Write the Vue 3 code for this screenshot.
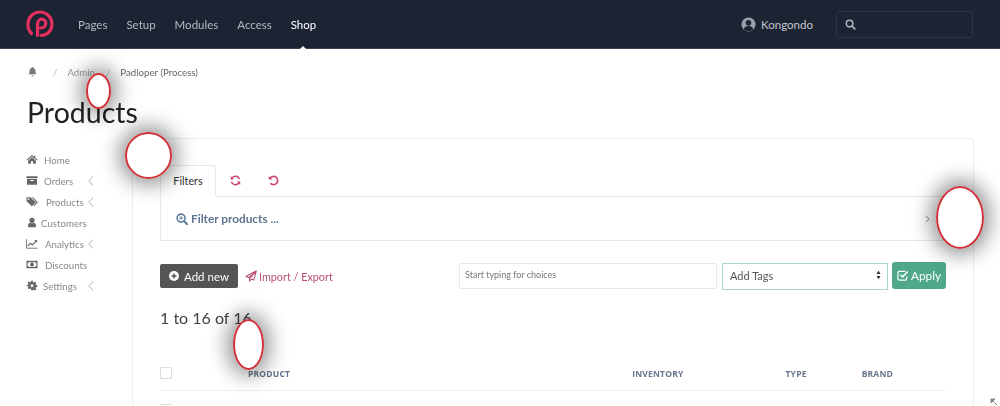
<script setup>
const navItems = ['Pages', 'Setup', 'Modules', 'Access', 'Shop']
const sideItems = [
  { label: 'Home', icon: 'home', gap: 6, arrow: false },
  { label: 'Orders', icon: 'archive', gap: 6, arrow: true },
  { label: 'Products', icon: 'tags', gap: 8, arrow: true },
  { label: 'Customers', icon: 'user', gap: 3, arrow: false },
  { label: 'Analytics', icon: 'chart', gap: 7, arrow: true },
  { label: 'Discounts', icon: 'money', gap: 7, arrow: false },
  { label: 'Settings', icon: 'cog', gap: 5, arrow: true },
]
const columns = [
  { label: 'PRODUCT', cls: 'col-product' },
  { label: 'INVENTORY', cls: 'col-inventory' },
  { label: 'TYPE', cls: 'col-type' },
  { label: 'BRAND', cls: 'col-brand' },
]
</script>

<template>
  <div class="page">
    <div class="content">
      <header class="topbar">
        <svg class="logo" viewBox="0 0 28 28" width="28" height="28">
          <path d="M5.500 23.500C3 21 1.900 18 1.900 14.500 1.900 7.600 7.400 2 14 2S26 7.600 26 14c0 6.600-4.500 11-11 11.500" fill="none" stroke="#e2305f" stroke-width="3.200" stroke-linecap="round"/>
          <path d="M11.500 25.500V14.500c0-3 1.800-5.300 4.300-5.300 2.400 0 4 1.800 4 4.200 0 2.800-2.200 4.600-5.300 4.600" fill="none" stroke="#e2305f" stroke-width="3.200" stroke-linecap="round"/>
        </svg>
        <nav class="nav">
          <a v-for="item in navItems" :key="item" class="nav-link" :class="{ active: item === 'Shop' }">{{ item }}</a>
        </nav>
        <div class="user">
          <svg viewBox="0 0 16 16" width="15" height="15">
            <circle cx="8" cy="8" r="7.500" fill="#9aa0ac"/>
            <circle cx="8" cy="6.200" r="3" fill="#1c2333"/>
            <path d="M2.800 13c.8-2.400 2.800-3.400 5.200-3.400s4.400 1 5.200 3.400A7 7 0 0 1 8 15a7 7 0 0 1-5.200-2z" fill="#1c2333"/>
          </svg>
          <span>Kongondo</span>
        </div>
        <div class="search">
          <svg viewBox="0 0 12 12" width="11" height="11">
            <circle cx="5" cy="5" r="3.600" fill="none" stroke="#aab0ba" stroke-width="1.700"/>
            <path d="M7.700 7.700l3 3" stroke="#aab0ba" stroke-width="2" stroke-linecap="round"/>
          </svg>
        </div>
      </header>

      <div class="crumbs">
        <svg class="bell" viewBox="0 0 10 11" width="9" height="10">
          <path d="M5 0a1 1 0 0 1 1 1c1.700.4 2.300 1.800 2.300 3.300 0 2 .5 2.800 1.200 3.700H.5c.7-.9 1.200-1.700 1.200-3.700C1.700 2.800 2.300 1.400 4 1a1 1 0 0 1 1-1zM3.800 9h2.400a1.200 1.200 0 0 1-2.400 0z" fill="#777"/>
        </svg>
        <span class="sep first">/</span>
        <span class="crumb-link">Admin</span>
        <span class="sep">/</span>
        <span class="crumb-current">Padloper (Process)</span>
      </div>

      <h1 class="title">Products</h1>

      <div class="body">
        <aside class="side">
          <div v-for="item in sideItems" :key="item.label" class="side-item">
            <svg class="side-icon" :class="'i-' + item.icon" viewBox="0 0 14 12" fill="#666">
              <path v-if="item.icon === 'home'" d="M7 .8l2.200 1.900V1.500h1.600v2.600L13.500 6.400l-.7.800L7 2.400 1.200 7.200l-.7-.8zM7 3.500l4.500 3.700V11H8.300V8H5.700v3H2.500V7.200z"/>
              <path v-else-if="item.icon === 'archive'" d="M.5 1h13v2.500H.5zM1.200 4.200h11.600V11H1.200zM5 5.500v1h4v-1z" fill-rule="evenodd"/>
              <path v-else-if="item.icon === 'tags'" d="M.5 1h4.800l6 6-4.500 4.500-6.300-6zM2.800 2.300a1 1 0 1 0 .01 0zM6.800 1h1.400l5.500 6-4.200 4.500-.8-.8L12 7z" fill-rule="evenodd"/>
              <path v-else-if="item.icon === 'user'" d="M7 .5a3 3 0 0 1 3 3 3 3 0 0 1-6 0 3 3 0 0 1 3-3zM2.500 11.500V9c0-1.800 1.200-2.800 2.500-2.800.6.500 1.200.7 2 .7s1.400-.2 2-.7c1.300 0 2.500 1 2.500 2.800v2.500z"/>
              <template v-else-if="item.icon === 'chart'">
                <path d="M.5 1v10.500h13" fill="none" stroke="#666" stroke-width="1"/>
                <path d="M2 9l3-3.200 2.400 1.800L12 3" fill="none" stroke="#666" stroke-width="1.400"/>
                <path d="M10 2h3v3z"/>
              </template>
              <template v-else-if="item.icon === 'money'">
                <path d="M.5 1.500h13v9H.5zM1.800 3v6h10.400V3z" fill-rule="evenodd"/>
                <ellipse cx="7" cy="6" rx="2.200" ry="2.600"/>
                <path d="M1.800 3h2L1.800 5zM12.200 3h-2l2 2zM1.800 9h2l-2-2zM12.200 9h-2l2-2z"/>
              </template>
              <path v-else d="M6 .5h2l.3 1.600 1 .4 1.400-.9 1.400 1.400-.9 1.400.4 1 1.600.3v2l-1.600.3-.4 1 .9 1.400-1.400 1.400-1.400-.9-1 .4L8 11.500H6l-.3-1.600-1-.4-1.400.9-1.400-1.400.9-1.400-.4-1L.8 7.300v-2l1.600-.3.4-1-.9-1.400 1.400-1.400 1.400.9 1-.4zM7 4.500a1.700 1.700 0 1 0 .01 0z" fill-rule="evenodd"/>
            </svg>
            <span class="side-label" :style="{ marginLeft: item.gap + 'px' }">{{ item.label }}</span>
            <svg v-if="item.arrow" class="side-arrow" viewBox="0 0 6 10" width="6" height="10">
              <path d="M5 .5L1 5l4 4.500" fill="none" stroke="#c4c4c4" stroke-width="1.100"/>
            </svg>
          </div>
        </aside>

        <main class="card">
          <div class="tabs">
            <div class="tab">Filters</div>
            <svg class="tab-icon" viewBox="0 0 12 12" width="11" height="11">
              <path d="M10.500 4.300A4.700 4.700 0 0 0 2.300 3.400M1.500 7.700a4.700 4.700 0 0 0 8.200.9" fill="none" stroke="#c9476f" stroke-width="1.800"/>
              <path d="M.8 1.200v3.600h3.600zM11.200 10.800V7.200H7.600z" fill="#c9476f"/>
            </svg>
            <svg class="tab-icon second" viewBox="0 0 12 12" width="11" height="11">
              <path d="M2.400 3.400A4.500 4.500 0 1 1 2.600 9" fill="none" stroke="#c9476f" stroke-width="1.800"/>
              <path d="M.8 1v4h4z" fill="#c9476f"/>
            </svg>
          </div>
          <div class="filter-panel">
            <svg viewBox="0 0 13 13" width="12" height="12">
              <circle cx="5.500" cy="5.500" r="4.300" fill="none" stroke="#5b7a9c" stroke-width="1.700"/>
              <path d="M8.800 8.800l3.300 3.300" stroke="#5b7a9c" stroke-width="2.200" stroke-linecap="round"/>
              <path d="M3.500 5.500h4M5.500 3.500v4" stroke="#5b7a9c" stroke-width="1.100"/>
            </svg>
            <span class="filter-text">Filter products ...</span>
            <svg class="filter-arrow" viewBox="0 0 6 10" width="5" height="8">
              <path d="M1 1l4 4-4 4" fill="none" stroke="#aaa" stroke-width="1.400"/>
            </svg>
          </div>

          <div class="actions">
            <button class="btn-add">
              <svg viewBox="0 0 12 12" width="10" height="10">
                <circle cx="6" cy="6" r="6" fill="#fff"/>
                <path d="M6 3v6M3 6h6" stroke="#555" stroke-width="1.800"/>
              </svg>
              <span>Add new</span>
            </button>
            <a class="import">
              <svg viewBox="0 0 13 13" width="12" height="12">
                <path d="M12.300.8L1 7l2.800 1.300L11 2.500 5 9v3l2-2.200 2.600 1.200z" fill="none" stroke="#b8506f" stroke-width="1.100" stroke-linejoin="round"/>
              </svg>
              <span>Import / Export</span>
            </a>
            <div class="tag-input">Start typing for choices</div>
            <div class="tag-select">
              <span>Add Tags</span>
              <svg viewBox="0 0 6 11" width="5" height="10">
                <path d="M3 .5l2.500 3.800h-5zM3 10.500L.5 6.700h5z" fill="#333"/>
              </svg>
            </div>
            <button class="btn-apply">
              <svg viewBox="0 0 13 12" width="12" height="11">
                <path d="M10.500 7v2.500a1.500 1.500 0 0 1-1.500 1.500H2.500A1.500 1.500 0 0 1 1 9.500V3a1.500 1.500 0 0 1 1.500-1.500H9" fill="none" stroke="#fff" stroke-width="1.300"/>
                <path d="M3.800 5.200L6 7.400l5.800-5.800" fill="none" stroke="#fff" stroke-width="1.700"/>
              </svg>
              <span>Apply</span>
            </button>
          </div>

          <div class="count">1 to 16 of 16</div>

          <div class="thead">
            <span class="check"></span>
            <span v-for="col in columns" :key="col.label" class="th" :class="col.cls">{{ col.label }}</span>
          </div>
          <div class="row">
            <span class="check"></span>
          </div>
        </main>
      </div>

      <svg class="corner" viewBox="0 0 8 8" width="8" height="8">
        <path d="M1 1h4L1 5zM3 3l4 4" fill="#888" stroke="#888" stroke-width="1"/>
      </svg>
    </div>

    <span class="mark m1"></span>
    <span class="mark m2"></span>
    <span class="mark m3"></span>
    <span class="mark m4"></span>
  </div>
</template>

<style>
html, body { margin: 0; background: #fff; }
</style>

<style scoped>
.page {
  position: relative;
  width: 1000px;
  height: 406px;
  overflow: hidden;
  background: #fff;
  font-family: Lato, "Open Sans", "Liberation Sans", sans-serif;
  color: #333;
}
.content {
  height: 406px;
  filter: blur(0.35px);
}
.topbar {
  height: 48px;
  background: #1c2333;
  border-bottom: 1px solid #3a4150;
  display: flex;
  align-items: center;
  padding-left: 26px;
}
.logo { flex: none; }
.nav { display: flex; gap: 19px; margin-left: 24px; }
.nav-link { position: relative; font-size: 11.500px; color: #b4b8c0; line-height: 49px; }
.nav-link.active { color: #fff; }
.nav-link.active::after {
  content: "";
  position: absolute;
  left: 50%;
  bottom: -1px;
  margin-left: -4px;
  border: 4px solid transparent;
  border-top: 0;
  border-bottom-color: #fff;
}
.user {
  margin-left: auto;
  display: flex;
  align-items: center;
  gap: 5px;
  font-size: 11.500px;
  color: #c3c6cc;
}
.search {
  width: 137px;
  height: 27px;
  margin: 0 27px 0 23px;
  border: 1px solid #2b3347;
  border-radius: 3px;
  display: flex;
  align-items: center;
  padding-left: 8px;
  box-sizing: border-box;
}
.crumbs {
  display: flex;
  align-items: center;
  height: 16px;
  margin: 15px 0 0 28px;
  font-size: 9.700px;
  color: #666;
}
.sep { color: #bbb; margin: 0 10px 0 11px; }
.sep.first { margin-left: 16px; }
.crumb-link { color: #999; }
.title {
  margin: 15px 0 0 27px;
  font-size: 28.500px;
  line-height: 34px;
  font-weight: 400;
  color: #222;
}
.body {
  display: flex;
  margin-top: 9px;
  padding-left: 132px;
  position: relative;
}
.side {
  position: absolute;
  left: 26px;
  top: 11px;
  width: 68px;
}
.side-item {
  height: 21px;
  display: flex;
  align-items: center;
  font-size: 9.700px;
  color: #888;
}
.side-icon { width: 12px; height: 11px; flex: none; }
.side-arrow { margin-left: auto; }
.card {
  width: 842px;
  height: 300px;
  box-sizing: border-box;
  border: 1px solid #eee;
  border-radius: 4px;
  padding: 25px 27px 0;
}
.tabs { display: flex; align-items: center; height: 32px; }
.tab {
  width: 56px;
  height: 32px;
  box-sizing: border-box;
  border: 1px solid #e8e8e8;
  border-bottom: 1px solid #fff;
  border-radius: 3px 3px 0 0;
  position: relative;
  top: 1px;
  background: #fff;
  z-index: 1;
  text-align: center;
  font-size: 10.800px;
  line-height: 30px;
  color: #333;
}
.tab-icon { margin-left: 14px; }
.tab-icon.second { margin-left: 27px; }
.filter-panel {
  height: 45px;
  box-sizing: border-box;
  border: 1px solid #e8e8e8;
  display: flex;
  align-items: center;
  padding-left: 15px;
}
.filter-text {
  margin-left: 3px;
  font-size: 11.800px;
  font-weight: 700;
  color: #5f7590;
}
.filter-arrow { margin-left: auto; margin-right: 15px; }
.actions {
  display: flex;
  align-items: center;
  margin-top: 21px;
  height: 28px;
}
.btn-add {
  width: 78px;
  height: 24px;
  display: flex;
  align-items: center;
  justify-content: center;
  gap: 5px;
  border: 0;
  border-radius: 2px;
  background: #555;
  color: #fff;
  font: 11.500px Lato, sans-serif;
  padding: 0;
}
.import {
  display: flex;
  align-items: center;
  gap: 2px;
  margin-left: 7px;
  font-size: 10.800px;
  color: #b8506f;
  width: 214px;
}
.tag-input {
  width: 258px;
  height: 26px;
  margin-top: -1px;
  box-sizing: border-box;
  border: 1px solid #eaeaea;
  font-size: 9px;
  line-height: 22px;
  padding-left: 5px;
  color: #777;
}
.tag-select {
  width: 166px;
  height: 27px;
  margin-left: 5px;
  box-sizing: border-box;
  border: 1px solid #a8d8c8;
  display: flex;
  align-items: center;
  justify-content: space-between;
  padding: 0 6px 2px 7px;
  font-size: 11px;
  color: #555;
}
.btn-apply {
  width: 54px;
  height: 27px;
  margin-left: 4px;
  margin-top: -1px;
  border: 0;
  border-radius: 3px;
  background: #4fa88a;
  color: #fff;
  display: flex;
  align-items: center;
  justify-content: center;
  gap: 2px;
  font: 11.800px Lato, sans-serif;
  padding: 0;
}
.count {
  margin-top: 16px;
  font-size: 16px;
  line-height: 24px;
  color: #444;
}
.thead {
  position: relative;
  height: 35px;
  margin-top: 25px;
  width: 785px;
  border-bottom: 1px solid #eee;
  display: flex;
  align-items: center;
  font-family: "Open Sans", sans-serif;
}
.check {
  width: 12px;
  height: 12px;
  box-sizing: border-box;
  border: 1px solid #ddd;
  border-radius: 1px;
  display: block;
}
.th {
  margin-top: 2px;
  font-size: 8.500px;
  font-weight: 700;
  color: #66758c;
  letter-spacing: .2px;
}
.col-product { margin-left: 76px; }
.col-inventory { margin-left: 342px; }
.col-type { margin-left: 102px; }
.col-brand { margin-left: 55px; }
.row { padding-top: 13px; }
.corner { position: absolute; right: 2px; bottom: 0; }
.mark {
  position: absolute;
  box-sizing: border-box;
  border: 2px solid #cf3238;
  border-radius: 50%;
  background: rgba(255, 255, 255, .94);
  box-shadow: 0 0 20px 6px rgba(0, 0, 0, .42);
}
.m1 { left: 86px; top: 73px; width: 25px; height: 36px; }
.m2 { left: 125px; top: 132px; width: 47px; height: 47px; }
.m3 { left: 936px; top: 186px; width: 48px; height: 63px; }
.m4 { left: 233px; top: 319px; width: 31px; height: 51px; }
</style>
